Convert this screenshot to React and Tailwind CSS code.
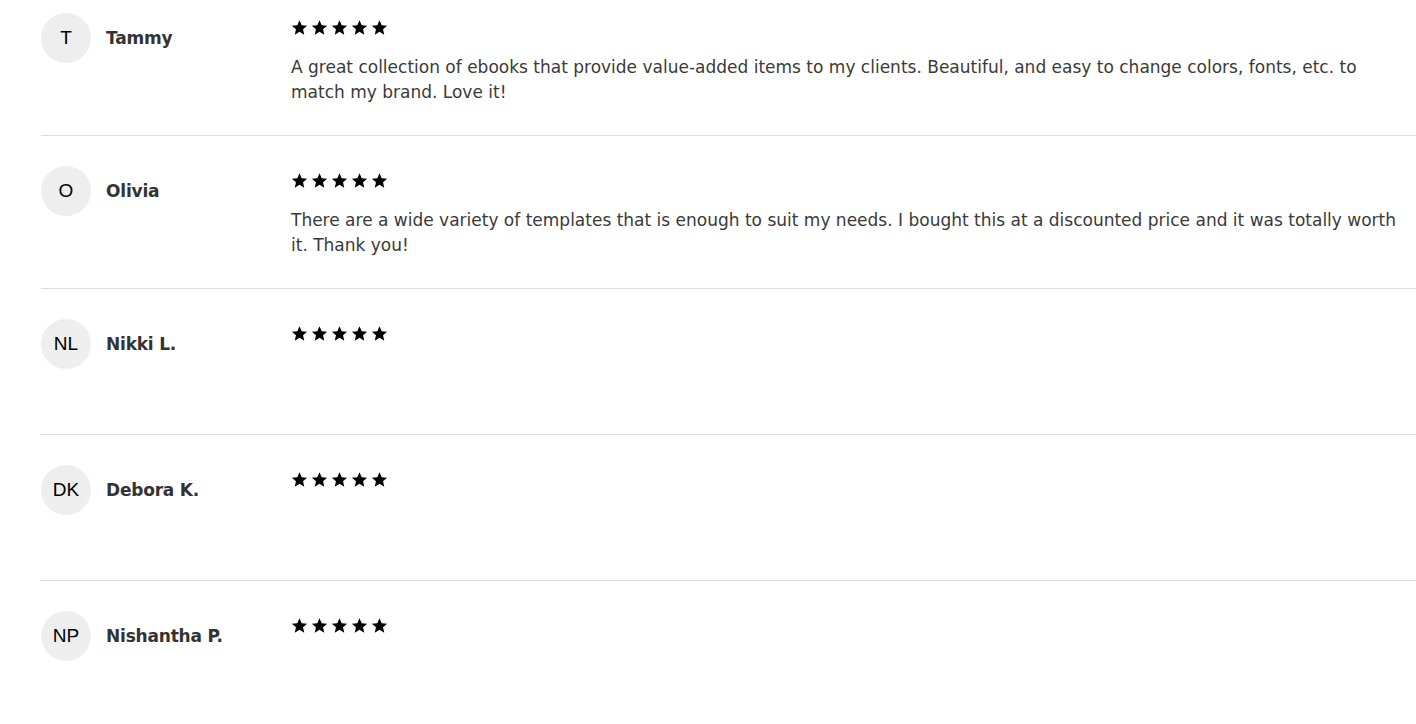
const REVIEWS = [
  {
    initials: "T",
    name: "Tammy",
    text: "A great collection of ebooks that provide value-added items to my clients. Beautiful, and easy to change colors, fonts, etc. to match my brand. Love it!",
  },
  {
    initials: "O",
    name: "Olivia",
    text: "There are a wide variety of templates that is enough to suit my needs. I bought this at a discounted price and it was totally worth it. Thank you!",
  },
  { initials: "NL", name: "Nikki L.", text: "" },
  { initials: "DK", name: "Debora K.", text: "" },
  { initials: "NP", name: "Nishantha P.", text: "" },
];

function Star() {
  return (
    <svg viewBox="0 0 24 24" className="w-[17px] h-[17px]" fill="#000">
      <path d="M12 1.6l3.1 7.1 7.7.7-5.8 5.1 1.7 7.6L12 18.1l-6.7 4 1.7-7.6-5.8-5.1 7.7-.7z" />
    </svg>
  );
}

function Stars() {
  return (
    <div className="flex items-center gap-[3px] h-[28px]">
      {[0, 1, 2, 3, 4].map((i) => (
        <Star key={i} />
      ))}
    </div>
  );
}

export default function App() {
  return (
    <div className="bg-white min-h-screen w-[1416px] overflow-hidden pl-[41px]" style={{ fontFamily: "'DejaVu Sans', sans-serif" }}>
      {REVIEWS.map((r, i) => (
        <div
          key={r.name}
          className={`flex border-[#dedede] pb-[30px] w-[1400px] ${i === 0 ? "pt-[13px]" : "pt-[30px]"} ${i < REVIEWS.length - 1 ? "border-b" : ""}`}
        >
          <div className="w-[250px] shrink-0 flex items-start gap-[15px] min-h-[85px]">
            <div className="w-[50px] h-[50px] rounded-full bg-[#eeeeee] flex items-center justify-center text-[19px] text-black font-['Liberation_Sans',sans-serif]">
              {r.initials}
            </div>
            <div className="h-[50px] pt-[1px] flex items-center text-[17px] font-bold text-[#333333] tracking-[-0.2px]">
              {r.name}
            </div>
          </div>
          <div className="w-[1110px]">
            <Stars />
            {r.text && (
              <p className="mt-[14px] text-[17px] leading-[25px] text-[#3a3a3a]">{r.text}</p>
            )}
          </div>
        </div>
      ))}
    </div>
  );
}
